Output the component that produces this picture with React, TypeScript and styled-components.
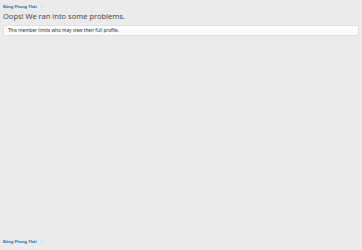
import styled, { createGlobalStyle } from "styled-components";
import { FC } from "react";

const GlobalStyle = createGlobalStyle`
  html, body {
    margin: 0;
    padding: 0;
    background: #ebebeb;
  }
  body {
    font-family: "Noto Sans", "Liberation Sans", sans-serif;
  }
`;

export const Page = styled.div`
  min-height: 100vh;
  box-sizing: border-box;
  display: flex;
  flex-direction: column;
  padding: 4px 3px 6px;
`;

export const Crumbs = styled.ul<{ $bottom?: boolean }>`
  list-style: none;
  margin: ${(props) => (props.$bottom ? "auto 0 0" : "0")};
  padding: 0;
  display: flex;
  align-items: center;
  height: 5px;
`;

export const Crumb = styled.li`
  display: flex;
  align-items: center;
  gap: 4px;
  font-size: 4px;
  font-weight: 700;
  color: #2577b1;
  line-height: 5px;
`;

export const Chevron = styled.span`
  color: #9a9a9a;
  font-weight: 400;
  font-size: 5px;
`;

export const Title = styled.h1`
  margin: 3px 0 4px;
  font-size: 7.5px;
  font-weight: 400;
  line-height: 9px;
  color: #4a4a4a;
`;

export const Notice = styled.div`
  background: #fefefe;
  border: 1px solid #dfdfdf;
  border-radius: 2px;
  padding: 1px 4px;
  font-size: 4.7px;
  line-height: 7px;
  color: #2a2a2a;
`;

interface CrumbProps {
  bottom?: boolean;
}

const Breadcrumb: FC<CrumbProps> = ({ bottom }) => (
  <Crumbs $bottom={bottom}>
    <Crumb>
      Bùng Phong Thái <Chevron>›</Chevron>
    </Crumb>
  </Crumbs>
);

export default function App() {
  return (
    <>
      <GlobalStyle />
      <Page>
        <Breadcrumb />
        <Title>Oops! We ran into some problems.</Title>
        <Notice>This member limits who may view their full profile.</Notice>
        <Breadcrumb bottom />
      </Page>
    </>
  );
}
